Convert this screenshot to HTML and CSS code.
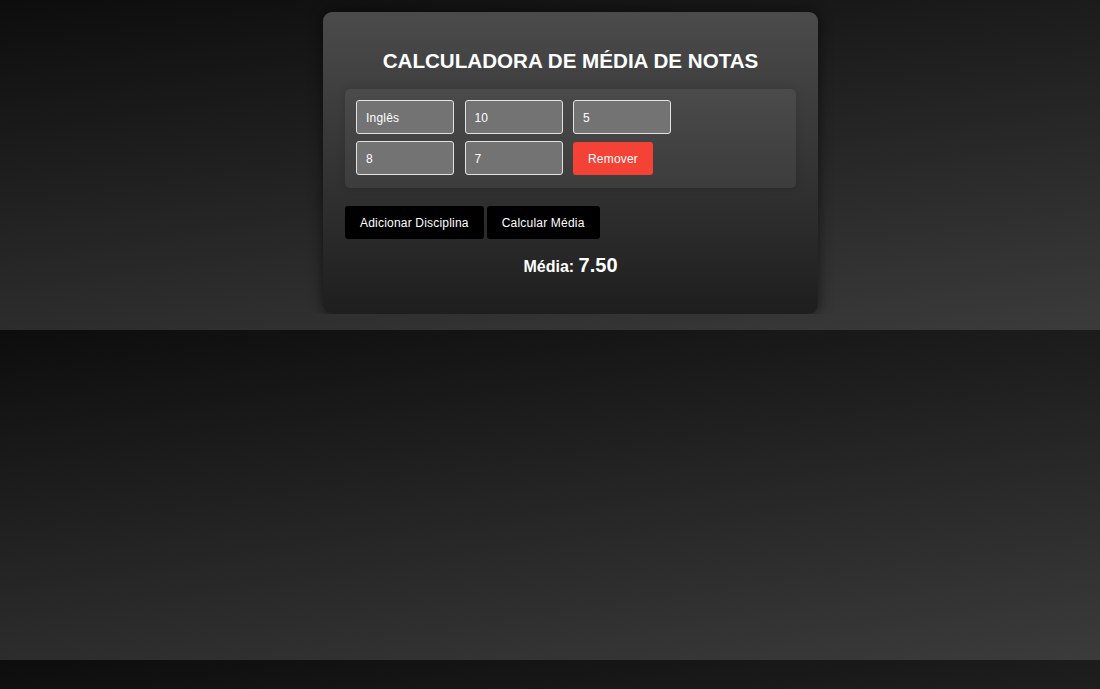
FILE: index.html
```html
<!DOCTYPE html>
<html lang="pt-BR">
<head>
<meta charset="UTF-8">
<title>Calculadora de Média de Notas</title>
<link rel="stylesheet" href="styles.css">
</head>
<body>
  <div class="container">
    <h1 class="title">CALCULADORA DE MÉDIA DE NOTAS</h1>
    <div class="subjects">
      <div class="subject-grid">
        <input class="field" type="text" value="Inglês">
        <input class="field" type="text" value="10">
        <input class="field" type="text" value="5">
        <input class="field" type="text" value="8">
        <input class="field" type="text" value="7">
        <button class="btn-remove" type="button">Remover</button>
      </div>
    </div>
    <div class="actions">
      <button class="btn-dark" type="button">Adicionar Disciplina</button>
      <button class="btn-dark" type="button">Calcular Média</button>
    </div>
    <p class="result">Média: <span class="result-value">7.50</span></p>
  </div>
</body>
</html>
```

FILE: styles.css
```css
html {
  background: linear-gradient(172deg, #0d0d0d 0%, #3b3b3b 100%);
  background-size: 100% 330px;
  background-repeat: repeat;
  min-height: 100%;
}

body {
  margin: 0;
  padding: 12px 0 0 41px;
  font-family: "Liberation Sans", Arial, sans-serif;
  color: #fff;
  display: flex;
  justify-content: center;
}

.container {
  width: 451px;
  padding: 21px 22px 19px;
  border-radius: 9px;
  background: linear-gradient(180deg, #4b4b4b 0%, #1e1e1e 100%);
  box-shadow: 0 0 14px rgba(0, 0, 0, 0.55);
}

.title {
  margin: 16px 0 17px;
  font-size: 20.6px;
  line-height: 23px;
  font-weight: bold;
  text-align: center;
}

.subjects {
  padding: 11px 11px 13px;
  border-radius: 5px;
  background: rgba(255, 255, 255, 0.06);
  box-shadow: 0 0 8px rgba(0, 0, 0, 0.15);
}

.subject-grid {
  display: grid;
  grid-template-columns: 98px 98px 98px;
  column-gap: 10.5px;
  row-gap: 7px;
}

.field {
  box-sizing: border-box;
  width: 98px;
  height: 34px;
  margin: 0;
  padding: 1px 9px 0;
  border: 1px solid #e2e2e2;
  border-radius: 3px;
  background: #737373;
  color: #fff;
  font-family: "Liberation Sans", Arial, sans-serif;
  font-size: 12px;
  letter-spacing: 0.2px;
  outline: none;
}

.btn-remove {
  box-sizing: border-box;
  width: 80px;
  height: 33px;
  margin: 1px 0 0;
  padding: 1px 0 0;
  border: none;
  border-radius: 3px;
  background: #f44336;
  color: #fff;
  font-family: "Liberation Sans", Arial, sans-serif;
  font-size: 12px;
  letter-spacing: 0.2px;
}

.actions {
  display: flex;
  gap: 3px;
  margin-top: 18px;
}

.btn-dark {
  height: 33px;
  padding: 1px 15px 0;
  border: none;
  border-radius: 3px;
  background: #000;
  color: #fff;
  font-family: "Liberation Sans", Arial, sans-serif;
  font-size: 12px;
  letter-spacing: 0.2px;
}

.result {
  margin: 15px 0 17px;
  text-align: center;
  font-size: 16px;
  font-weight: bold;
  line-height: 23px;
}

.result-value {
  font-size: 20px;
}
```
